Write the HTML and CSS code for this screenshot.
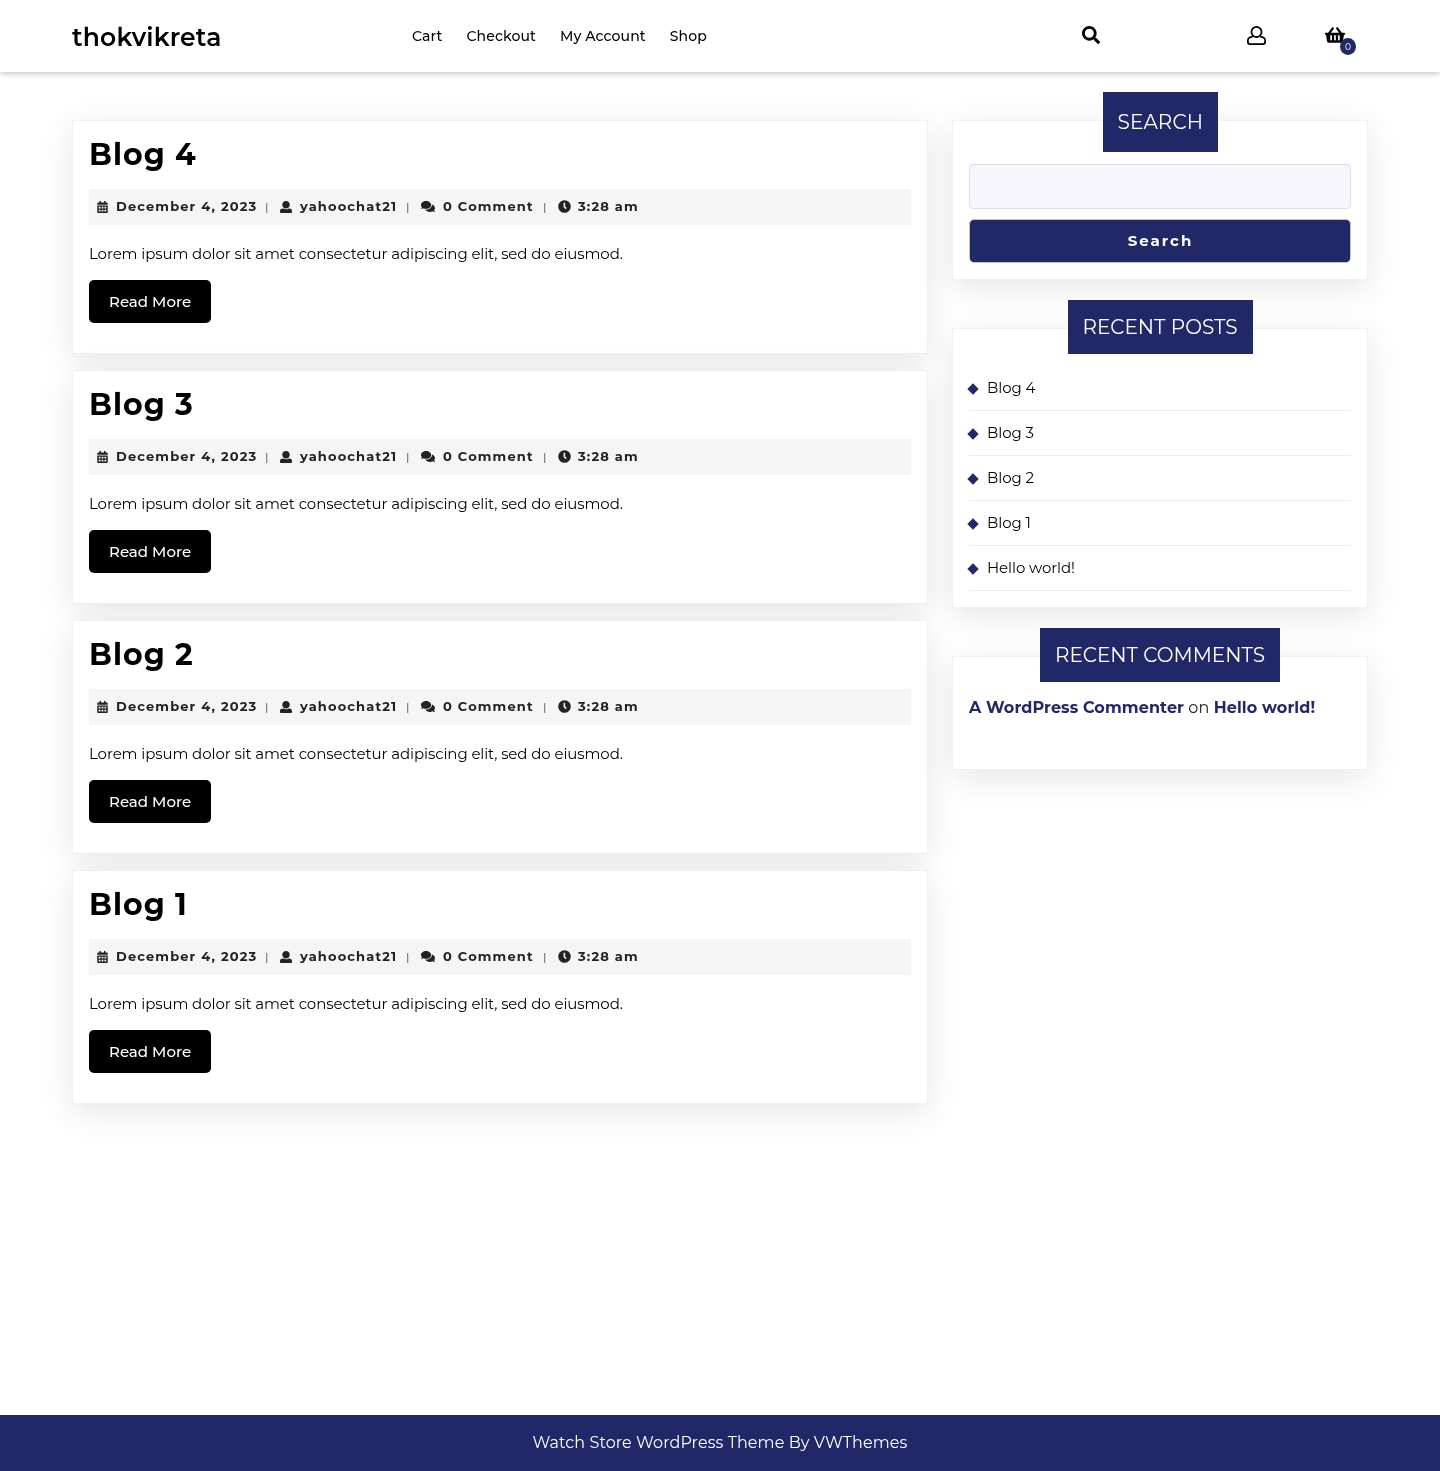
FILE: index.html
```html
<!DOCTYPE html>
<html lang="en">
<head>
<meta charset="utf-8">
<title>thokvikreta</title>
<link rel="stylesheet" href="styles.css">
</head>
<body>
<svg width="0" height="0" class="sprite" aria-hidden="true">
  <symbol id="search" viewBox="0 0 512 512"><path d="M505 442.7L405.3 343c-4.5-4.5-10.6-7-17-7H372c27.6-35.3 44-79.7 44-128C416 93.1 322.9 0 208 0S0 93.1 0 208s93.1 208 208 208c48.3 0 92.7-16.4 128-44v16.3c0 6.4 2.5 12.5 7 17l99.7 99.7c9.4 9.4 24.6 9.4 33.9 0l28.3-28.3c9.4-9.4 9.4-24.6.1-34zM208 336c-70.7 0-128-57.2-128-128 0-70.7 57.2-128 128-128 70.7 0 128 57.2 128 128 0 70.7-57.2 128-128 128z"/></symbol>
  <symbol id="account" viewBox="0 0 512 512"><path fill="none" stroke="currentColor" stroke-width="48" stroke-linejoin="round" d="M256 24a136 136 0 1 1 0 272a136 136 0 1 1 0-272zM150 286l-70 20C46 318 24 350 24 386v48c0 32 22 54 54 54h356c32 0 54-22 54-54v-48c0-36-22-68-56-80l-70-20"/></symbol>
  <symbol id="basket" viewBox="0 0 576 512"><path d="M576 216v16c0 13.255-10.745 24-24 24h-8l-26.113 182.788C514.509 462.435 494.257 480 470.37 480H105.63c-23.887 0-44.139-17.565-47.518-41.212L32 256h-8c-13.255 0-24-10.745-24-24v-16c0-13.255 10.745-24 24-24h67.341l106.78-146.821c10.395-14.292 30.407-17.453 44.701-7.058 14.293 10.395 17.453 30.408 7.058 44.701L170.477 192h235.046L326.12 82.821c-10.395-14.292-7.234-34.306 7.059-44.701 14.291-10.395 34.306-7.235 44.701 7.058L484.659 192H552c13.255 0 24 10.745 24 24zM312 392V280c0-13.255-10.745-24-24-24s-24 10.745-24 24v112c0 13.255 10.745 24 24 24s24-10.745 24-24zm112 0V280c0-13.255-10.745-24-24-24s-24 10.745-24 24v112c0 13.255 10.745 24 24 24s24-10.745 24-24zm-224 0V280c0-13.255-10.745-24-24-24s-24 10.745-24 24v112c0 13.255 10.745 24 24 24s24-10.745 24-24z"/></symbol>
  <symbol id="calendar" viewBox="0 0 448 512"><path fill-rule="evenodd" d="M436 160H12c-6.600 0-12-5.400-12-12v-36c0-26.500 21.500-48 48-48h48V12c0-6.600 5.400-12 12-12h40c6.600 0 12 5.400 12 12v52h128V12c0-6.600 5.400-12 12-12h40c6.600 0 12 5.400 12 12v52h48c26.500 0 48 21.500 48 48v36c0 6.600-5.400 12-12 12zM0 192h448v272c0 26.500-21.500 48-48 48H48c-26.500 0-48-21.500-48-48zM64 248v76h76v-76zM186 248v76h76v-76zM308 248v76h76v-76zM64 376v76h76v-76zM186 376v76h76v-76zM308 376v76h76v-76z"/></symbol>
  <symbol id="user" viewBox="0 0 512 512"><path d="M256 0c88.366 0 160 71.634 160 160s-71.634 160-160 160S96 248.366 96 160 167.634 0 256 0zm183.283 333.821l-71.313-17.828c-74.923 53.89-165.738 41.864-223.940 0l-71.313 17.828C29.981 344.505 0 382.903 0 426.955V464c0 26.510 21.490 48 48 48h416c26.510 0 48-21.490 48-48v-37.045c0-44.052-29.981-82.450-72.717-93.134z"/></symbol>
  <symbol id="comments" viewBox="0 0 576 512"><path d="M416 192c0-88.400-93.100-160-208-160S0 103.600 0 192c0 34.300 14.100 65.900 38 92-13.400 30.200-35.500 54.200-35.800 54.500-2.200 2.300-2.800 5.700-1.500 8.700S4.800 352 8 352c36.600 0 66.900-12.300 88.700-25 32.200 15.700 70.300 25 111.300 25 114.900 0 208-71.600 208-160zm122 220c23.900-26 38-57.700 38-92 0-66.900-53.500-124.200-129.300-148.100.9 6.600 1.300 13.300 1.300 20.100 0 105.900-107.700 192-240 192-10.800 0-21.300-.8-31.700-1.900C207.800 439.600 281.800 480 368 480c41 0 79.100-9.200 111.300-25 21.800 12.700 52.100 25 88.700 25 3.200 0 6.100-1.900 7.300-4.800 1.300-2.900.7-6.300-1.500-8.700-.3-.3-22.400-24.200-35.800-54.500z"/></symbol>
  <symbol id="clock" viewBox="0 0 512 512"><circle cx="256" cy="256" r="248"/><path d="M250 104v160l72 76" fill="none" stroke="#f5f5f5" stroke-width="62"/></symbol>
</svg>

<header class="header">
  <a class="brand">thokvikreta</a>
  <nav class="nav"><a>Cart</a><a>Checkout</a><a>My Account</a><a>Shop</a></nav>
  <div class="actions">
    <svg class="i-search"><use href="#search"/></svg>
    <svg class="i-account"><use href="#account"/></svg>
    <span class="basket"><svg class="i-basket"><use href="#basket"/></svg><span class="badge">0</span></span>
  </div>
</header>

<main class="main">
  <div class="posts">
    <article class="card post">
      <h2 class="title">Blog 4</h2>
      <div class="meta"><svg class="m-cal"><use href="#calendar"/></svg><span class="date">December 4, 2023</span><i>|</i><svg class="m-user"><use href="#user"/></svg><span class="author">yahoochat21</span><i>|</i><svg class="m-com"><use href="#comments"/></svg><span class="comment">0 Comment</span><i>|</i><svg class="m-clock"><use href="#clock"/></svg><span class="time">3:28 am</span></div>
      <p class="excerpt">Lorem ipsum dolor sit amet consectetur adipiscing elit, sed do eiusmod.</p>
      <a class="more">Read More</a>
    </article>
    <article class="card post">
      <h2 class="title">Blog 3</h2>
      <div class="meta"><svg class="m-cal"><use href="#calendar"/></svg><span class="date">December 4, 2023</span><i>|</i><svg class="m-user"><use href="#user"/></svg><span class="author">yahoochat21</span><i>|</i><svg class="m-com"><use href="#comments"/></svg><span class="comment">0 Comment</span><i>|</i><svg class="m-clock"><use href="#clock"/></svg><span class="time">3:28 am</span></div>
      <p class="excerpt">Lorem ipsum dolor sit amet consectetur adipiscing elit, sed do eiusmod.</p>
      <a class="more">Read More</a>
    </article>
    <article class="card post">
      <h2 class="title">Blog 2</h2>
      <div class="meta"><svg class="m-cal"><use href="#calendar"/></svg><span class="date">December 4, 2023</span><i>|</i><svg class="m-user"><use href="#user"/></svg><span class="author">yahoochat21</span><i>|</i><svg class="m-com"><use href="#comments"/></svg><span class="comment">0 Comment</span><i>|</i><svg class="m-clock"><use href="#clock"/></svg><span class="time">3:28 am</span></div>
      <p class="excerpt">Lorem ipsum dolor sit amet consectetur adipiscing elit, sed do eiusmod.</p>
      <a class="more">Read More</a>
    </article>
    <article class="card post">
      <h2 class="title">Blog 1</h2>
      <div class="meta"><svg class="m-cal"><use href="#calendar"/></svg><span class="date">December 4, 2023</span><i>|</i><svg class="m-user"><use href="#user"/></svg><span class="author">yahoochat21</span><i>|</i><svg class="m-com"><use href="#comments"/></svg><span class="comment">0 Comment</span><i>|</i><svg class="m-clock"><use href="#clock"/></svg><span class="time">3:28 am</span></div>
      <p class="excerpt">Lorem ipsum dolor sit amet consectetur adipiscing elit, sed do eiusmod.</p>
      <a class="more">Read More</a>
    </article>
  </div>

  <aside class="sidebar">
    <section class="card widget w-search">
      <h3 class="label l-search">Search</h3>
      <input class="field" type="text" aria-label="Search">
      <button class="submit">Search</button>
    </section>
    <section class="card widget w-posts">
      <h3 class="label l-posts">Recent Posts</h3>
      <ul class="list"><li>Blog 4</li><li>Blog 3</li><li>Blog 2</li><li>Blog 1</li><li>Hello world!</li></ul>
    </section>
    <section class="card widget w-comments">
      <h3 class="label l-comments">Recent Comments</h3>
      <p class="said"><b>A WordPress Commenter</b> on <b>Hello world!</b></p>
    </section>
  </aside>
</main>

<footer class="footer">Watch Store WordPress Theme By VWThemes</footer>
</body>
</html>
```
FILE: styles.css
```css
* { box-sizing: border-box; }
html { background: #fff; }
body { margin: 0; min-height: 1471px; display: flex; flex-direction: column; color: #000; font-family: Montserrat, Inter, sans-serif; will-change: transform; }
svg { display: block; fill: currentColor; flex: none; }
.sprite { position: absolute; }
h2, h3, p, ul { margin: 0; padding: 0; font-weight: 400; }

.header { height: 72px; padding: 0 72px; display: flex; align-items: center; box-shadow: 0 2px 6px rgba(0,0,0,.22); }
.brand { width: 340px; padding-top: 2px; font-size: 25px; font-weight: 600; letter-spacing: .18px; white-space: nowrap; }
.nav { display: flex; gap: 24px; font-size: 14px; font-weight: 500; letter-spacing: .12px; white-space: nowrap; }
.actions { margin-left: auto; margin-right: 23px; display: flex; align-items: center; height: 18px; margin-bottom: 2px; }
.i-search { width: 18px; height: 18px; }
.i-account { width: 19px; height: 19px; margin-left: 147px; }
.basket { position: relative; margin-left: 59px; }
.i-basket { width: 20px; height: 18px; }
.badge { position: absolute; left: 15px; top: 12px; width: 16px; height: 17px; border-radius: 50%; background: #212868; color: #fff; font-size: 9px; line-height: 18px; text-align: center; }

.main { flex: 1; display: grid; grid-template-columns: 856px 416px; gap: 24px; padding: 48px 72px 0; align-items: start; }
.card { background: #fff; border: 1px solid #f0f0f0; box-shadow: 0 8px 32px rgba(0,0,0,.1); padding: 16px; }
.posts { display: flex; flex-direction: column; gap: 16px; }
.post { height: 234px; }
.title { font-size: 30px; line-height: 36px; font-weight: 700; letter-spacing: 1px; }
.meta { margin-top: 16px; height: 36px; padding: 0 0 1px 8px; background: #f5f5f5; display: flex; align-items: center; color: #222; font-size: 13px; font-weight: 700; white-space: nowrap; }
.meta i { width: 3px; margin: 0 12px 0 8px; font-style: normal; font-weight: 400; font-size: 12px; color: #444; }
.m-cal { width: 11px; height: 12px; }
.m-user { width: 12px; height: 12px; }
.m-com { width: 14px; height: 13px; }
.m-clock { width: 13px; height: 13px; }
.meta span { margin-bottom: 2px; letter-spacing: 1.15px; }
.date { margin-left: 8px; width: 141px; }
.author { margin-left: 8px; width: 98px; }
.comment { margin-left: 8px; width: 92px; }
.time { margin-left: 7px; }
.excerpt { margin-top: 16px; font-size: 15px; line-height: 26px; letter-spacing: -.1px; }
.more { display: block; margin-top: 13px; width: 122px; height: 43px; padding-left: 20px; line-height: 43px; border-radius: 5px; background: #000; color: #fff; font-size: 15px; font-weight: 500; white-space: nowrap; }

.sidebar { display: flex; flex-direction: column; gap: 48px; }
.widget { display: flex; flex-direction: column; }
.label { align-self: center; margin-top: -45px; height: 54px; padding-left: 15px; line-height: 54px; background: #212868; color: #fff; font-size: 20px; text-transform: uppercase; white-space: nowrap; }
.l-search { width: 115px; height: 60px; line-height: 60px; letter-spacing: .1px; }
.l-posts { width: 185px; }
.l-comments { width: 240px; }
.w-search { height: 160px; }
.w-posts { height: 280px; }
.w-comments { height: 114px; }
.field { margin-top: 12px; height: 45px; border: 1px solid #ddd; border-radius: 4px; background: #f7f6fe; }
.submit { margin-top: 10px; height: 44px; padding: 0 0 2px 1px; border: 1px solid #c4c4c8; border-radius: 5px; background: #212868; color: #fff; font: 700 15px Montserrat, Inter, sans-serif; letter-spacing: 2px; }
.list { margin-top: 12px; list-style: none; font-size: 15px; letter-spacing: -.1px; }
.list li { height: 45px; line-height: 44px; border-bottom: 1px solid #eee; display: flex; align-items: center; gap: 10px; }
.list li::before { content: ""; width: 8px; height: 8px; background: #212868; transform: rotate(45deg); margin-top: 2px; }
.said { margin-top: 14px; font-size: 16px; line-height: 24px; letter-spacing: .1px; color: #222; white-space: nowrap; }
.said b { font-weight: 700; color: #212868; }

.footer { height: 56px; line-height: 55px; text-align: center; background: #212868; color: #fff; font-size: 16px; letter-spacing: .08px; }
```
